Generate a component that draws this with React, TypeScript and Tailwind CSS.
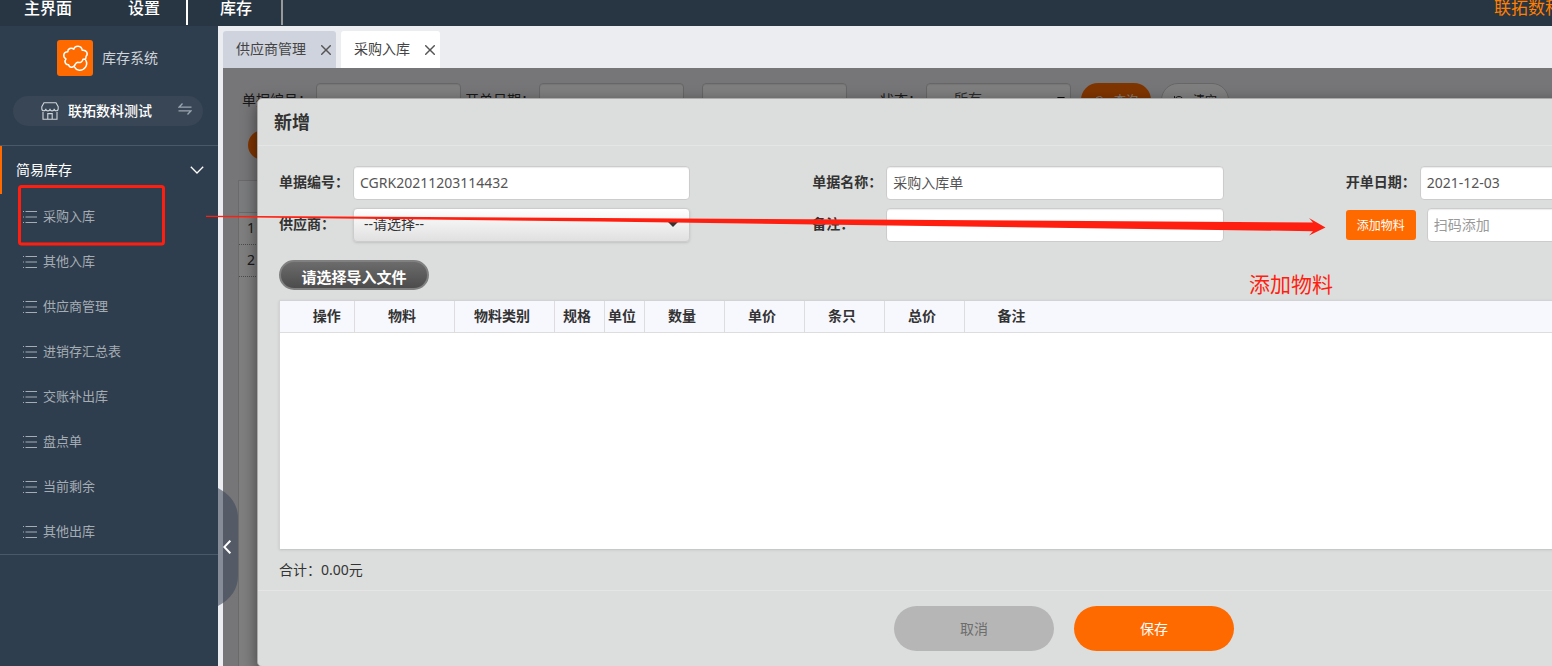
import React from 'react';
import { RotateCcw, Search, X } from 'lucide-react';

const menuItems = ['采购入库', '其他入库', '供应商管理', '进销存汇总表', '交账补出库', '盘点单', '当前剩余', '其他出库'];

const columns = [
  { name: '操作', className: 'w-[74px] pl-5' },
  { name: '物料', className: 'w-[100px] pr-1' },
  { name: '物料类别', className: 'w-[100px] pr-1' },
  { name: '规格', className: 'w-[50px] pr-1' },
  { name: '单位', className: 'w-[40px] pr-1' },
  { name: '数量', className: 'w-[80px] pr-1' },
  { name: '单价', className: 'w-[80px] pr-1' },
  { name: '条只', className: 'w-[80px] pr-1' },
  { name: '总价', className: 'w-[80px] pr-1' },
];

const inputClass =
  'h-[34px] rounded-sm border border-[#ccc] bg-white px-1.5 pb-0.5 text-sm text-[#555] shadow-[inset_0_1px_1px_rgba(0,0,0,0.08)] outline-none placeholder:text-[#999]';

function Logo() {
  return (
    <svg viewBox="0 0 36 36" className="size-9 rounded-[3px] bg-[#ff6a00]" fill="none" stroke="#fff" strokeWidth="1.5" strokeLinecap="round" strokeLinejoin="round">
      <path d="M18.200 24.300C17.400 27.600 12.600 28.600 11.600 24.800C8.400 25.200 6.900 21.200 9 19C5.600 17.200 6 11.800 10.800 11.800C10.600 8.800 14.200 7 16.800 9.200C17.800 5 24.600 5 25.200 10.200C29.600 9.600 31.600 13.800 29 16.600C29.400 18.600 27.800 19.600 26 19.200C25.600 21.800 23.200 23.200 20.800 22.200C20 22.400 19 23 18.200 24.300" />
      <path d="M28.600 19.800C31.600 25 27.400 30.600 22.200 30.200C20.200 30 18.600 29.200 17.800 27.400" />
    </svg>
  );
}

function StoreIcon() {
  return (
    <svg viewBox="0 0 18 18" className="size-[18px]" fill="none" stroke="#cfd5da" strokeWidth="1.1">
      <path d="M3 .8h12l2.200 3.800v2.200a2 2 0 0 1-4 0a2 2 0 0 1-4.200 0a2 2 0 0 1-4.200 0a2 2 0 0 1-4 0V4.600zM2 10v7.200h14V10M6.800 17v-5.400h4.400V17" />
    </svg>
  );
}

function ListIcon() {
  return (
    <svg viewBox="0 0 14 12" className="h-3 w-3.5" fill="none" stroke="currentColor" strokeWidth="1">
      <path d="M0 .5h1M0 6h1M0 11.500h1M2.500 .5H14M2.500 6H14M2.500 11.500H14" />
    </svg>
  );
}

function Sidebar() {
  return (
    <aside className="w-[218px] shrink-0 bg-[#2f3e4e]">
      <div className="flex items-center gap-[9px] pt-3.5 pl-[57px] text-sm text-[#ced3d8]">
        <Logo />
        库存系统
      </div>
      <button className="mx-[13px] mt-5 flex h-[30px] w-[190px] items-center rounded-full bg-[#384655] pr-[11px] pl-7 text-sm font-medium text-white">
        <StoreIcon />
        <span className="ml-[9px]">联拓数科测试</span>
        <svg viewBox="0 0 14 12" className="mb-1 ml-auto h-3 w-3.5" fill="none" stroke="#9aa5af" strokeWidth="1.3">
          <path d="M4.500 .5L1 4.200h12.500M.5 7.800H13L9.500 11.500" />
        </svg>
      </button>
      <nav className="mt-[19px] border-y border-[#4a5968]">
        <button className="flex h-12 w-full items-center justify-between border-l-2 border-[#ff6a00] pr-3.5 pl-3.5 text-sm text-white">
          简易库存
          <svg viewBox="0 0 14 8" className="h-2 w-3.5" fill="none" stroke="#fff" strokeWidth="1.3">
            <path d="M.8 .8L7 7L13.200 .8" />
          </svg>
        </button>
        <ul>
          {menuItems.map((item) => (
            <li key={item}>
              <a href="#" className="flex h-[45px] items-center gap-1.5 pl-[23px] text-[13px] text-[#a5adb4]">
                <ListIcon />
                {item}
              </a>
            </li>
          ))}
        </ul>
      </nav>
    </aside>
  );
}

function Tab({ title, active }: { title: string; active?: boolean }) {
  return (
    <div className={`flex h-[37px] items-center gap-[15px] rounded-t-[3px] pr-[5px] pb-0.5 pl-[13px] text-sm text-[#444] ${active ? 'bg-white' : 'bg-[#cfd3dd]'}`}>
      <button>{title}</button>
      <button aria-label={`关闭${title}`} className="pt-0.5">
        <X size={10} strokeWidth={2} viewBox="5 5 14 14" className="text-[#555]" />
      </button>
    </div>
  );
}

// list page that sits under the modal backdrop
function OrderList() {
  return (
    <div className="h-full min-w-[1330px] pt-[15px] text-sm text-[#333]">
      <div className="flex items-center pl-[19px]">
        <label htmlFor="q-no" className="w-[74px]">单据编号：</label>
        <input id="q-no" className={`${inputClass} w-[145px]`} />
        <label htmlFor="q-from" className="ml-1 w-[74px]">开单日期：</label>
        <input id="q-from" className={`${inputClass} w-[145px]`} />
        <input aria-label="结束日期" className={`${inputClass} ml-[18px] w-[145px]`} />
        <label htmlFor="q-status" className="ml-[33px] w-[46px]">状态：</label>
        <div className="relative">
          <select id="q-status" className={`${inputClass} w-[145px] appearance-none pl-[18px]`}>
            <option>--所有--</option>
          </select>
          <svg viewBox="0 0 8 5" className="absolute top-[14px] right-1.5 h-[5px] w-2">
            <path d="M0 0h8L4 5z" fill="#111" />
          </svg>
        </div>
        <button className="ml-2.5 flex h-[34px] w-[70px] items-center justify-center gap-2 rounded-full bg-[#ff6a00] pt-0.5 text-xs text-white">
          <Search size={12} />
          查询
        </button>
        <button className="ml-2.5 flex h-[34px] w-[68px] items-center justify-center gap-2 rounded-full border border-[#ccc] bg-white pt-0.5 text-xs">
          <RotateCcw size={12} />
          清空
        </button>
      </div>
      <button className="mt-[13px] ml-[25px] block h-[30px] w-[80px] rounded-full bg-[#ff6a00] text-white">新增</button>
      <div className="mt-5 ml-[15px] h-full border border-[#d5d5d5] bg-white">
        <table className="w-full">
          <thead>
            <tr className="h-[31px] border-b border-[#d5d5d5] bg-[#f7f8fd]">
              <th />
            </tr>
          </thead>
          <tbody>
            {[1, 2].map((n) => (
              <tr key={n} className="h-8 border-b border-dotted border-[#999]">
                <td className="pl-2">{n}</td>
              </tr>
            ))}
          </tbody>
        </table>
      </div>
    </div>
  );
}

function Field({ label, id, children }: { label: string; id: string; children: React.ReactNode }) {
  return (
    <div className="flex items-center px-[15px]">
      <label htmlFor={id} className="w-[74px] shrink-0 pb-0.5 font-bold">{label}</label>
      {children}
    </div>
  );
}

function AddDialog() {
  return (
    <div
      role="dialog"
      aria-label="新增"
      className="absolute top-[30px] left-[34px] w-[104vw] rounded-[5px] border border-[#aaa] bg-[#dcdedd] text-sm text-[#333] shadow-[0_5px_15px_rgba(0,0,0,0.5)]"
    >
      <h2 className="border-b border-[#e5e5e5] py-3 pl-4 text-lg leading-[22px] font-bold">新增</h2>
      <form className="px-1.5 pt-5">
        <div className="grid grid-cols-3 gap-y-2">
          <Field label="单据编号：" id="no">
            <input id="no" defaultValue="CGRK20211203114432" className={`${inputClass} w-[67%]`} />
          </Field>
          <Field label="单据名称：" id="name">
            <input id="name" defaultValue="采购入库单" className={`${inputClass} w-[67%]`} />
          </Field>
          <Field label="开单日期：" id="date">
            <input id="date" defaultValue="2021-12-03" className={`${inputClass} w-[67%]`} />
          </Field>
          <Field label="供应商：" id="supplier">
            <div className="relative w-[67%]">
              <select
                id="supplier"
                className="h-[34px] w-full appearance-none rounded-sm border border-[#ccc] bg-linear-to-b from-white to-[#e0e0e0] pb-0.5 pl-2.5 text-sm text-[#333] shadow-sm outline-none"
              >
                <option>--请选择--</option>
              </select>
              <svg viewBox="0 0 10 5" className="absolute top-[14px] right-3 h-[5px] w-2.5">
                <path d="M0 0h10L5 5z" fill="#333" />
              </svg>
            </div>
          </Field>
          <Field label="备注：" id="remark">
            <input id="remark" className={`${inputClass} w-[67%]`} />
          </Field>
          <div className="flex items-center gap-[11px] px-[15px]">
            <button type="button" className="h-[30px] w-[70px] rounded-[3px] bg-[#ff6a00] pt-0.5 text-xs text-white">添加物料</button>
            <input aria-label="扫码添加" placeholder="扫码添加" className={`${inputClass} w-[67%]`} />
          </div>
        </div>
        <div className="px-[15px]">
          <button
            type="button"
            className="mt-[18px] h-[30px] w-[150px] rounded-full border-2 border-[#808080] bg-linear-to-b from-[#6c6c6c] to-[#4c4c4c] text-[15px] leading-[30px] font-bold text-white"
          >
            请选择导入文件
          </button>
          <div className="mt-2.5 h-[249px] border-t border-l border-[#d3d3d3] bg-white shadow-sm">
            <table className="w-full table-fixed">
              <thead>
                <tr className="h-[31px] border-b border-[#ddd] bg-[#f7f8fe]">
                  {columns.map((col) => (
                    <th key={col.name} className={`border-r border-[#ddd] p-0 font-bold whitespace-nowrap ${col.className}`}>
                      {col.name}
                    </th>
                  ))}
                  <th className="pl-[33px] text-left font-bold">备注</th>
                </tr>
              </thead>
            </table>
          </div>
          <p className="pt-[11px] pb-2.5 leading-5">合计：0.00元</p>
        </div>
      </form>
      <div className="flex justify-center gap-5 border-t border-[#e5e5e5] py-[15px]">
        <button className="h-[45px] w-40 rounded-full bg-[#b6b6b6] text-[#6d6d6d]">取消</button>
        <button className="h-[45px] w-40 rounded-full bg-[#ff6a00] text-white">保存</button>
      </div>
    </div>
  );
}

function Annotations() {
  return (
    <div className="pointer-events-none absolute inset-0 overflow-hidden">
      <svg className="size-full" fill="#ff1f10">
        <rect x="19.500" y="186.500" width="144" height="57.500" rx="2" fill="none" stroke="#ff1f10" strokeWidth="3" />
        <path d="M206 215.800 L600 218 L900 219.800 L1313 222.600 L1309 218 L1325.500 227.400 L1309 235.500 L1313 231.200 L1000 227 L600 221.500 L206 217z" />
      </svg>
      <span className="absolute top-[269px] left-[1249px] text-[21px] leading-[30px] text-[#ff1f10]">添加物料</span>
    </div>
  );
}

export default function App() {
  return (
    <div className="relative flex h-screen flex-col overflow-hidden font-['Noto_Sans','Noto_Sans_CJK_SC',sans-serif]">
      <header className="flex h-[26px] shrink-0 items-start bg-[#283542] text-base leading-[17px] font-medium text-white">
        <a href="#" className="ml-6">主界面</a>
        <a href="#" className="ml-14">设置</a>
        <span className="ml-[26px] h-[25px] w-0.5 bg-white" />
        <a href="#" className="ml-8">库存</a>
        <span className="ml-[29px] h-[25px] w-0.5 bg-[#999]" />
        <span className="-mr-[27px] ml-auto text-[17px] leading-[15px] font-normal whitespace-nowrap text-[#ff7f00]">联拓数科测</span>
      </header>
      <div className="flex min-h-0 flex-1">
        <Sidebar />
        <main className="relative flex min-w-0 flex-1 flex-col bg-[#ecedf1] pl-[5px]">
          <div className="flex shrink-0 gap-[5px] pt-[5px]">
            <Tab title="供应商管理" />
            <Tab title="采购入库" active />
          </div>
          <div className="relative min-h-0 flex-1 overflow-hidden">
            <OrderList />
            <div className="absolute inset-0 bg-black/50" />
            <AddDialog />
          </div>
          <button aria-label="收起菜单" className="absolute top-[462px] left-0 flex h-[118px] w-5 items-center pl-[5px]">
            <svg viewBox="0 0 20 118" className="absolute inset-0 size-full">
              <path d="M0 0C13 7 20 17 20 30V88C20 101 13 111 0 118z" fill="#3d4959" fillOpacity="0.58" />
            </svg>
            <svg viewBox="0 0 8 14" className="relative h-3.5 w-2" fill="none" stroke="#fff" strokeWidth="2">
              <path d="M7.300 .7L1.300 7L7.300 13.300" />
            </svg>
          </button>
        </main>
      </div>
      <Annotations />
    </div>
  );
}
